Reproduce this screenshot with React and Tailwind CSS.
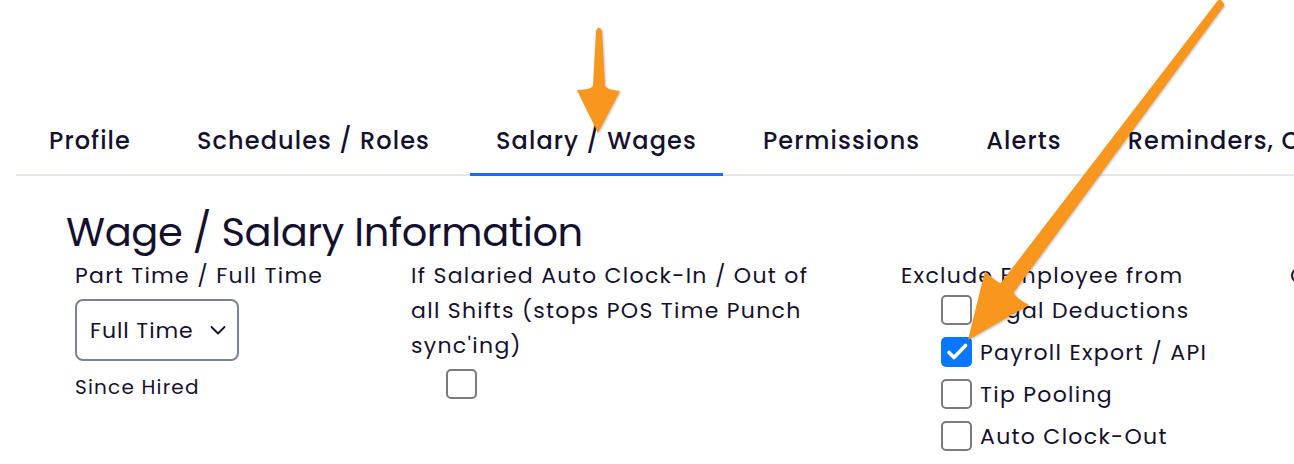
import React from "react";

const tabs = ["Profile", "Schedules / Roles", "Salary / Wages", "Permissions", "Alerts", "Reminders, Communications"];

const Box = ({ checked }) =>
  checked ? (
    <span className="flex h-[30px] w-[31px] shrink-0 items-center justify-center rounded-[5px] bg-[#0b76ff]">
      <svg width="24" height="24" viewBox="0 0 24 24" fill="none">
        <path d="M4 12.5l5 5L20.5 5.5" stroke="white" strokeWidth="3.6" strokeLinecap="round" strokeLinejoin="round" />
      </svg>
    </span>
  ) : (
    <span className="block h-[30px] w-[31px] shrink-0 rounded-[5px] border-2 border-[#7b7b7b] bg-white" />
  );

const excludes = [
  { label: "Legal Deductions", checked: false },
  { label: "Payroll Export / API", checked: true },
  { label: "Tip Pooling", checked: false },
  { label: "Auto Clock-Out", checked: false },
];

export default function App() {
  return (
    <div className="relative h-[464px] w-[1294px] overflow-hidden bg-white font-['Poppins','Inter',sans-serif] text-[#14112e]">
      {/* tabs */}
      <div className="ml-4 mt-[125px] flex gap-[14px] whitespace-nowrap border-b-2 border-[#e6e6ee] pl-[7px]">
        {tabs.map((t) => (
          <div
            key={t}
            className={`-mb-[2px] px-[26px] pb-[16px] text-[24px] font-medium leading-[32px] tracking-[1.1px] ${
              t === "Salary / Wages" ? "border-b-[3px] border-[#1a6ef5]" : "border-b-[3px] border-transparent"
            }`}
          >
            {t}
          </div>
        ))}
      </div>

      {/* heading */}
      <h1 className="ml-[66px] mt-[32px] text-[40px] font-normal leading-[48px] tracking-[-0.4px]">Wage / Salary Information</h1>

      <div className="mt-[2px] flex text-[22px] leading-[35px] tracking-[1.3px]">
        {/* col 1 */}
        <div className="ml-[75px] w-[336px] shrink-0">
          <div className="whitespace-nowrap">Part Time / Full Time</div>
          <div className="mt-[6px] flex h-[62px] w-[164px] items-center justify-between rounded-lg border-2 border-[#7a8199] pl-[13px] pr-[10px]">
            <span className="tracking-[0.9px]">Full Time</span>
            <svg width="18" height="18" viewBox="0 0 18 18" fill="none">
              <path d="M2.5 6l6.5 6.5L15.5 6" stroke="#14112e" strokeWidth="1.8" strokeLinecap="round" strokeLinejoin="round" />
            </svg>
          </div>
          <div className="mt-[9px] text-[20px] leading-[35px] tracking-[1.2px]">Since Hired</div>
        </div>

        {/* col 2 */}
        <div className="w-[490px] shrink-0">
          <div className="w-[400px]">If Salaried Auto Clock-In / Out of all Shifts (stops POS Time Punch sync'ing)</div>
          <div className="ml-[35px] mt-[6px]">
            <Box checked={false} />
          </div>
        </div>

        {/* col 3 */}
        <div className="w-[389px] shrink-0">
          <div className="whitespace-nowrap">Exclude Employee from</div>
          <div className="ml-[40px] flex flex-col gap-[12px] pt-[2px]">
            {excludes.map((e) => (
              <div key={e.label} className="flex h-[30px] items-center gap-[8px]">
                <Box checked={e.checked} />
                <span className="whitespace-nowrap">{e.label}</span>
              </div>
            ))}
          </div>
        </div>

        {/* col 4, cut off at the right edge */}
        <div className="whitespace-nowrap">Overtime</div>
      </div>

      {/* annotation arrows */}
      <svg
        className="pointer-events-none absolute left-0 top-0 drop-shadow-[1px_1px_1px_rgba(0,0,0,0.25)]"
        width="1294"
        height="464"
        viewBox="0 0 1294 464"
      >
        <path
          d="M596 31 Q599 24 602 31 L605 86 Q607 90 620 91 L598 133 L577 90 Q590 90 593 86 Z"
          fill="#f8961e"
        />
        <path
          d="M1224.2 5.4 L1013.4 292.8 Q1018 300 1029 305 L968 340 L985 271 Q996 282 1000.6 283.2 L1217.8 0.6 Q1222 -2 1224.2 5.4 Z"
          fill="#f8961e"
        />
      </svg>
    </div>
  );
}
